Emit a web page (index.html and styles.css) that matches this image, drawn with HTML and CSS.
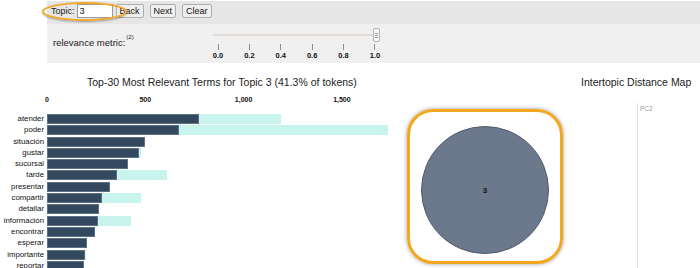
FILE: index.html
```html
<!DOCTYPE html>
<html lang="es">
<head>
  <meta charset="UTF-8">
  <title>LDAvis - Topic 3</title>
  <link rel="stylesheet" href="styles.css">
</head>
<body>
  <div class="toolbar">
    <div class="topic-row">
      <span class="topic-mark"></span>
      <label for="topicInput" class="topic-label">Topic:</label>
      <input type="text" id="topicInput" class="topic-input" value="3">
      <button class="btn btn-back">Back</button>
      <button class="btn">Next</button>
      <button class="btn">Clear</button>
    </div>

    <div class="relevance-row">
      <div class="relevance-label">relevance metric:<sup>(2)</sup></div>
      <div class="slider">
        <div class="slider-track"></div>
        <div class="slider-handle"><i></i><i></i><i></i></div>
        <div class="slider-ticks">
          <div class="tick"><span class="tick-line"></span><span>0.0</span></div>
          <div class="tick"><span class="tick-line"></span><span>0.2</span></div>
          <div class="tick"><span class="tick-line"></span><span>0.4</span></div>
          <div class="tick"><span class="tick-line"></span><span>0.6</span></div>
          <div class="tick"><span class="tick-line"></span><span>0.8</span></div>
          <div class="tick"><span class="tick-line"></span><span>1.0</span></div>
        </div>
      </div>
    </div>
  </div>

  <div class="main">
    <div class="bars-panel">
      <div class="panel-title bars-title">Top-30 Most Relevant Terms for Topic 3 (41.3% of tokens)</div>
      <div class="axis">
        <span class="axis-label">0</span>
        <span class="axis-label">500</span>
        <span class="axis-label">1,000</span>
        <span class="axis-label">1,500</span>
      </div>

      <div class="bars">
        <div class="term">atender</div>
        <div class="bar-total" style="width: 234px"><div class="bar-topic" style="width: 152px"></div></div>
        <div class="term">poder</div>
        <div class="bar-total" style="width: 341px"><div class="bar-topic" style="width: 132px"></div></div>
        <div class="term">situación</div>
        <div class="bar-total" style="width: 98px"><div class="bar-topic" style="width: 98px"></div></div>
        <div class="term">gustar</div>
        <div class="bar-total" style="width: 94px"><div class="bar-topic" style="width: 92px"></div></div>
        <div class="term">sucursal</div>
        <div class="bar-total" style="width: 81px"><div class="bar-topic" style="width: 81px"></div></div>
        <div class="term">tarde</div>
        <div class="bar-total" style="width: 120px"><div class="bar-topic" style="width: 70px"></div></div>
        <div class="term">presentar</div>
        <div class="bar-total" style="width: 63px"><div class="bar-topic" style="width: 63px"></div></div>
        <div class="term">compartir</div>
        <div class="bar-total" style="width: 94px"><div class="bar-topic" style="width: 55px"></div></div>
        <div class="term">detallar</div>
        <div class="bar-total" style="width: 52px"><div class="bar-topic" style="width: 52px"></div></div>
        <div class="term">información</div>
        <div class="bar-total" style="width: 84px"><div class="bar-topic" style="width: 51px"></div></div>
        <div class="term">encontrar</div>
        <div class="bar-total" style="width: 48px"><div class="bar-topic" style="width: 48px"></div></div>
        <div class="term">esperar</div>
        <div class="bar-total" style="width: 40px"><div class="bar-topic" style="width: 40px"></div></div>
        <div class="term">importante</div>
        <div class="bar-total" style="width: 39px"><div class="bar-topic" style="width: 38px"></div></div>
        <div class="term">reportar</div>
        <div class="bar-total" style="width: 37px"><div class="bar-topic" style="width: 37px"></div></div>
      </div>
    </div>

    <div class="cluster-box">
      <div class="topic-circle">3</div>
    </div>

    <div class="map-panel">
      <div class="panel-title">Intertopic Distance Map</div>
      <div class="pc-axis">PC2</div>
    </div>
  </div>
</body>
</html>
```

FILE: styles.css
```css
html, body {
  overflow: hidden;
}

body {
  margin: 0;
  font-family: "Liberation Sans", Arial, sans-serif;
  color: #222;
  background-color: white;
}

/* top controls */
.toolbar {
  margin-left: 47px;
  padding-top: 1px;
}

.topic-row {
  position: relative;
  display: flex;
  align-items: flex-start;
  height: 23px;
  box-sizing: border-box;
  padding: 3px 0 0 4px;
  background-color: #e6e6e6;
  font-size: 9px;
}

.topic-mark {
  position: absolute;
  left: -5px;
  top: 1px;
  width: 85px;
  height: 19px;
  box-sizing: border-box;
  border: 2px solid #f2a82a;
  border-radius: 50%;
  box-shadow: 0 1px 2px rgba(0, 0, 0, 0.35);
}

.topic-label {
  line-height: 14px;
  margin-right: 2px;
}

.topic-input {
  width: 36px;
  height: 14px;
  box-sizing: border-box;
  margin: 0;
  padding: 0 2px;
  border: 1px solid #9a9a9a;
  font: 9px "Liberation Sans", Arial, sans-serif;
  color: #111;
  background-color: white;
}

.btn {
  height: 14px;
  margin: 0 0 0 6px;
  padding: 0 3px;
  border: 1px solid #aeaeae;
  border-radius: 2px;
  background-color: #efefef;
  font: 9px "Liberation Sans", Arial, sans-serif;
  color: #111;
  line-height: 12px;
}

.btn-back {
  margin-left: 3px;
}

.relevance-row {
  display: flex;
  height: 39px;
  padding-left: 6px;
  background-color: #f0f0f0;
}

.relevance-label {
  flex: none;
  width: 157px;
  padding-top: 13px;
  font-size: 9.5px;
  line-height: 11px;
}

.relevance-label sup {
  font-size: 6px;
  vertical-align: top;
  position: relative;
  top: -5px;
  margin-left: 1px;
}

.slider {
  position: relative;
  width: 173px;
  padding-top: 10px;
}

.slider-track {
  height: 2px;
  margin: 0 5px 0 3px;
  background-color: #e2dbd5;
}

.slider-handle {
  position: absolute;
  left: 163px;
  top: 4px;
  width: 7px;
  height: 14px;
  box-sizing: border-box;
  border: 1px solid #b4b4b4;
  border-radius: 2px;
  background-color: #f6f6f6;
  display: flex;
  flex-direction: column;
  justify-content: center;
  align-items: center;
  gap: 1px;
}

.slider-handle i {
  display: block;
  width: 3px;
  height: 1px;
  background-color: #9a9a9a;
}

.slider-ticks {
  display: flex;
  justify-content: space-between;
  margin-top: 8px;
}

.tick {
  width: 16px;
  display: flex;
  flex-direction: column;
  align-items: center;
  font-size: 7.5px;
  font-weight: bold;
  line-height: 8px;
  color: #111;
}

.tick-line {
  width: 1px;
  height: 6px;
  margin-bottom: 2px;
  background-color: #8c8c8c;
}

/* charts */
.main {
  display: flex;
  align-items: flex-start;
}

.panel-title {
  margin-top: 13px;
  font-size: 10.5px;
  line-height: 12px;
  white-space: nowrap;
}

.bars-panel {
  flex: none;
  width: 407px;
}

.bars-title {
  padding-left: 87px;
}

.axis {
  display: flex;
  gap: 58.3px;
  margin-top: 8px;
  padding-left: 27px;
}

.axis-label {
  width: 40px;
  text-align: center;
  font-size: 7px;
  font-weight: bold;
  line-height: 8px;
  color: #111;
}

.bars {
  display: grid;
  grid-template-columns: 44px 1fr;
  grid-auto-rows: 11.3px;
  column-gap: 3px;
  margin-top: 10px;
}

.term {
  text-align: right;
  font-size: 7.8px;
  line-height: 10px;
  white-space: nowrap;
  color: #111;
}

.bar-total {
  height: 10px;
  background-color: #c8f4ed;
}

.bar-topic {
  height: 100%;
  box-sizing: border-box;
  border: 1px solid #5c7086;
  background-color: #33495f;
}

.cluster-box {
  flex: none;
  width: 156px;
  height: 155px;
  box-sizing: border-box;
  margin-top: 46px;
  padding: 14px 11px 0 11px;
  border: 3px solid #f3a71f;
  border-radius: 26px;
  box-shadow: 0 0 4px rgba(0, 0, 0, 0.4);
}

.topic-circle {
  width: 128px;
  height: 128px;
  box-sizing: border-box;
  border: 1px solid #525c6b;
  border-radius: 50%;
  background-color: #6c788c;
  display: flex;
  align-items: center;
  justify-content: center;
  font-size: 8px;
  font-weight: bold;
  color: #111;
}

.map-panel {
  margin-left: 18px;
}

.pc-axis {
  height: 200px;
  margin: 15px 0 0 56px;
  padding: 2px 0 0 2px;
  border-left: 1px solid #e2e2e2;
  font-size: 6.5px;
  line-height: 8px;
  color: #9a9a9a;
}
```
